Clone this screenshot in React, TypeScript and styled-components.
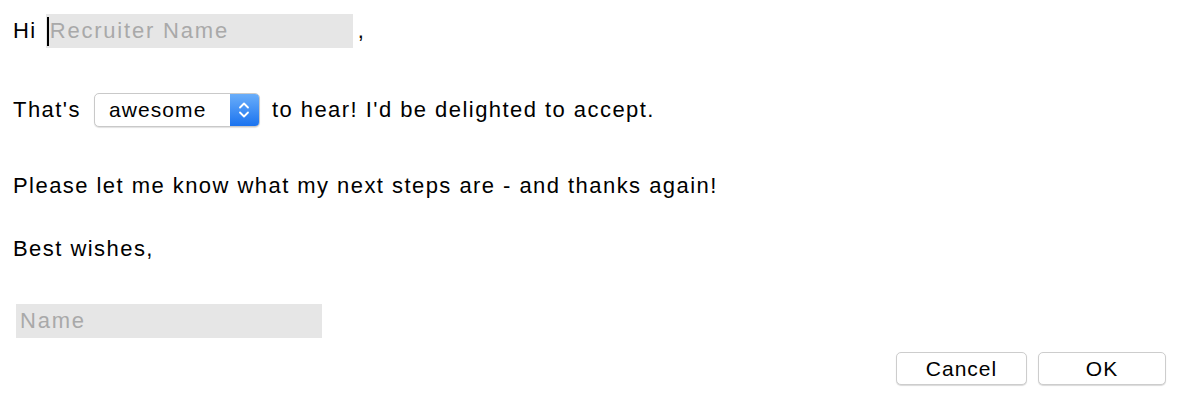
import styled, { createGlobalStyle } from 'styled-components'

const Global = createGlobalStyle`
  html, body {
    margin: 0;
    padding: 0;
    background: #ffffff;
  }
  body {
    font-family: "Liberation Sans", Arial, sans-serif;
    color: #000;
  }
`

const Page = styled.div`
  width: 1182px;
  height: 406px;
  box-sizing: border-box;
  padding: 14px 16px 0 13px;
  display: flex;
  flex-direction: column;
`

const Row = styled.div<{ $top: number; $indent?: number }>`
  display: flex;
  align-items: center;
  height: 34px;
  margin-top: ${p => p.$top}px;
  padding-left: ${p => p.$indent || 0}px;
  font-size: 22px;
  letter-spacing: 1.45px;
  white-space: pre;
`

const Field = styled.div<{ $w: number; $ml?: number; $mr?: number }>`
  position: relative;
  width: ${p => p.$w}px;
  height: 34px;
  margin: 0 ${p => p.$mr || 0}px 0 ${p => p.$ml || 0}px;
  background: #e6e6e6;
  display: flex;
  align-items: center;
  padding-left: 4px;
  box-sizing: border-box;
  color: #a9a9a9;
  font-size: 22px;
  letter-spacing: 1.8px;
`

const Caret = styled.span`
  position: absolute;
  left: 1px;
  top: 3px;
  width: 2px;
  height: 29px;
  background: #000;
`

const Select = styled.div`
  display: flex;
  height: 34px;
  width: 166px;
  margin: 0 12px 0 13px;
  box-sizing: border-box;
  border: 1px solid #c9c9c9;
  border-radius: 5px;
  overflow: hidden;
  background: #fff;
  box-shadow: 0 1px 1px rgba(0, 0, 0, 0.12);
`

const SelectLabel = styled.span`
  flex: 1;
  display: flex;
  align-items: center;
  padding-left: 14px;
  font-size: 21px;
  letter-spacing: 1.1px;
`

const SelectArrow = styled.span`
  width: 29px;
  display: flex;
  align-items: center;
  justify-content: center;
  background: linear-gradient(#6aaefa, #1b73ef);
`

const Footer = styled.div`
  display: flex;
  justify-content: flex-end;
  gap: 11px;
  margin-top: 14px;
`

const Button = styled.button<{ $w: number }>`
  width: ${p => p.$w}px;
  height: 33px;
  background: #fff;
  border: 1px solid #cdcdcd;
  border-radius: 5px;
  box-shadow: 0 1px 1px rgba(0, 0, 0, 0.15);
  font-family: "Liberation Sans", Arial, sans-serif;
  font-size: 21px;
  letter-spacing: 1px;
  color: #000;
  padding: 1px 0 0;
`

export default function App() {
  return (
    <>
      <Global />
      <Page>
        <Row $top={0}>
          <span>Hi</span>
          <Field $w={307} $ml={9} $mr={5}>
            <Caret />
            Recruiter Name
          </Field>
          <span>,</span>
        </Row>
        <Row $top={45}>
          <span>That's</span>
          <Select>
            <SelectLabel>awesome</SelectLabel>
            <SelectArrow>
              <svg width="12" height="20" viewBox="0 0 12 20" fill="none" stroke="#fff" strokeWidth="1.8" strokeLinecap="round" strokeLinejoin="round">
                <path d="M2 7.5 L6 3.5 L10 7.5" />
                <path d="M2 12.5 L6 16.5 L10 12.5" />
              </svg>
            </SelectArrow>
          </Select>
          <span>to hear! I'd be delighted to accept.</span>
        </Row>
        <Row $top={42}>Please let me know what my next steps are - and thanks again!</Row>
        <Row $top={29}>Best wishes,</Row>
        <Row $top={38} $indent={3}>
          <Field $w={306}>Name</Field>
        </Row>
        <Footer>
          <Button $w={131}>Cancel</Button>
          <Button $w={128}>OK</Button>
        </Footer>
      </Page>
    </>
  )
}
